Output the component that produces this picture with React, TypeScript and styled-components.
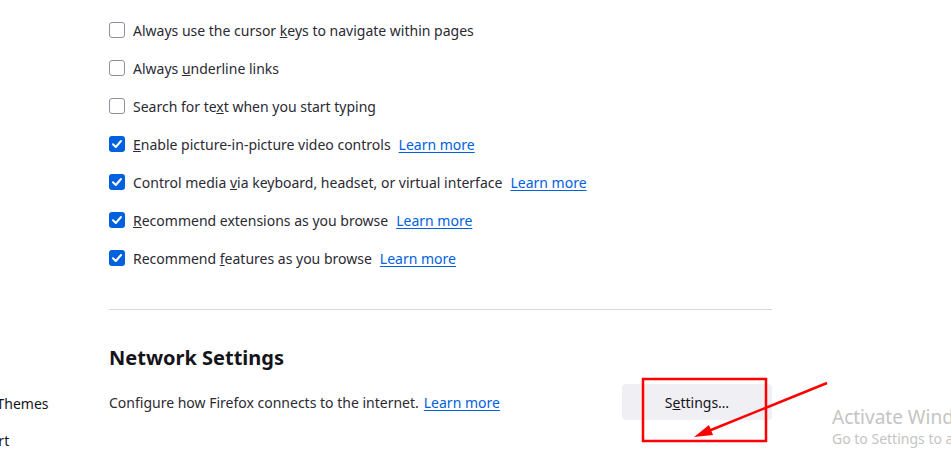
import styled, { createGlobalStyle } from "styled-components";

const Global = createGlobalStyle`
  html, body {
    margin: 0;
    padding: 0;
    background: #ffffff;
    overflow: hidden;
  }
  body {
    font-family: "Noto Sans", "Open Sans", sans-serif;
    color: #15141a;
  }
`;

const Page = styled.div`
  position: relative;
  width: 951px;
  height: 472px;
  display: grid;
  grid-template-columns: 109px 663px 1fr;
  overflow: hidden;
`;

const Sidebar = styled.nav`
  display: flex;
  flex-direction: column;
  gap: 19px;
  padding-top: 395px;
  margin-left: -92px;
  white-space: nowrap;
  font-size: 14px;
`;

const NavItem = styled.div`
  height: 18px;
  line-height: 18px;
  color: #15141a;
`;

const Main = styled.main`
  display: flex;
  flex-direction: column;
  padding-top: 19px;
`;

const Options = styled.div`
  display: flex;
  flex-direction: column;
  gap: 16px;
`;

const Row = styled.label`
  display: flex;
  align-items: center;
  height: 22px;
  font-size: 14px;
  color: #2b2a33;
  white-space: nowrap;
`;

const Box = styled.span<{ $checked?: boolean }>`
  box-sizing: border-box;
  width: 16px;
  height: 16px;
  margin-right: 8px;
  border-radius: 3px;
  display: flex;
  align-items: center;
  justify-content: center;
  flex-shrink: 0;
  background: ${(p) => (p.$checked ? "#0061e0" : "#ffffff")};
  border: ${(p) => (p.$checked ? "none" : "1.5px solid #8f8f9d")};
`;

const Link = styled.a<{ $gap?: number }>`
  margin-left: ${(p) => p.$gap ?? 8}px;
  color: #0061e0;
  text-decoration: underline;
  text-underline-offset: 2px;
  cursor: pointer;
`;

const Divider = styled.hr`
  width: 100%;
  margin: 40px 0 0;
  border: none;
  border-top: 1px solid #d7d7db;
`;

const Heading = styled.h2`
  margin: 33px 0 0;
  font-size: 20px;
  font-weight: 700;
  line-height: 30px;
  color: #15141a;
`;

const SettingRow = styled.div`
  display: flex;
  align-items: center;
  justify-content: space-between;
  margin-top: 11px;
  font-size: 14px;
  color: #2b2a33;
`;

const Button = styled.button`
  width: 150px;
  height: 36px;
  border: none;
  border-radius: 4px;
  background: #f0f0f4;
  font-family: inherit;
  font-size: 14px;
  color: #15141a;
`;

const Watermark = styled.div`
  position: absolute;
  left: 832px;
  top: 405px;
  white-space: nowrap;
  color: #c4c4c4;
  font-family: "Noto Sans", sans-serif;
`;

const WatermarkTitle = styled.div`
  font-size: 19px;
  line-height: 24px;
`;

const WatermarkSub = styled.div`
  font-size: 14px;
  line-height: 20px;
`;

const Annotation = styled.svg`
  position: absolute;
  left: 0;
  top: 0;
  pointer-events: none;
`;

function Check() {
  return (
    <svg width="12" height="12" viewBox="0 0 12 12">
      <path d="M2 6.3 L4.8 9 L10 3" fill="none" stroke="#fff" strokeWidth="2" strokeLinecap="round" strokeLinejoin="round" />
    </svg>
  );
}

type Opt = { label: React.ReactNode; checked?: boolean; link?: boolean };

const options: Opt[] = [
  { label: <>Always use the cursor <u>k</u>eys to navigate within pages</> },
  { label: <>Always <u>u</u>nderline links</> },
  { label: <>Search for te<u>x</u>t when you start typing</> },
  { label: <><u>E</u>nable picture-in-picture video controls</>, checked: true, link: true },
  { label: <>Control media <u>v</u>ia keyboard, headset, or virtual interface</>, checked: true, link: true },
  { label: <><u>R</u>ecommend extensions as you browse</>, checked: true, link: true },
  { label: <>Recommend <u>f</u>eatures as you browse</>, checked: true, link: true },
];

export default function App() {
  return (
    <>
      <Global />
      <Page>
        <Sidebar>
          <NavItem>Extensions &amp; Themes</NavItem>
          <NavItem>Firefox Support</NavItem>
        </Sidebar>
        <Main>
          <Options>
            {options.map((o, i) => (
              <Row key={i}>
                <Box $checked={o.checked}>{o.checked && <Check />}</Box>
                <span>{o.label}</span>
                {o.link && <Link>Learn more</Link>}
              </Row>
            ))}
          </Options>
          <Divider />
          <Heading>Network Settings</Heading>
          <SettingRow>
            <span>
              Configure how Firefox connects to the internet.
              <Link $gap={5}>Learn more</Link>
            </span>
            <Button>
              S<u>e</u>ttings…
            </Button>
          </SettingRow>
        </Main>
        <div />
        <Watermark>
          <WatermarkTitle>Activate Windows</WatermarkTitle>
          <WatermarkSub>Go to Settings to activate Windows.</WatermarkSub>
        </Watermark>
        <Annotation width="951" height="472">
          <rect x="643" y="379" width="123" height="62" fill="none" stroke="#ff0000" strokeWidth="2.5" />
          <line x1="827" y1="383" x2="706" y2="432" stroke="#ff0000" strokeWidth="2.5" />
          <polygon points="694,437 709,425 713,435" fill="#ff0000" />
        </Annotation>
      </Page>
    </>
  );
}
